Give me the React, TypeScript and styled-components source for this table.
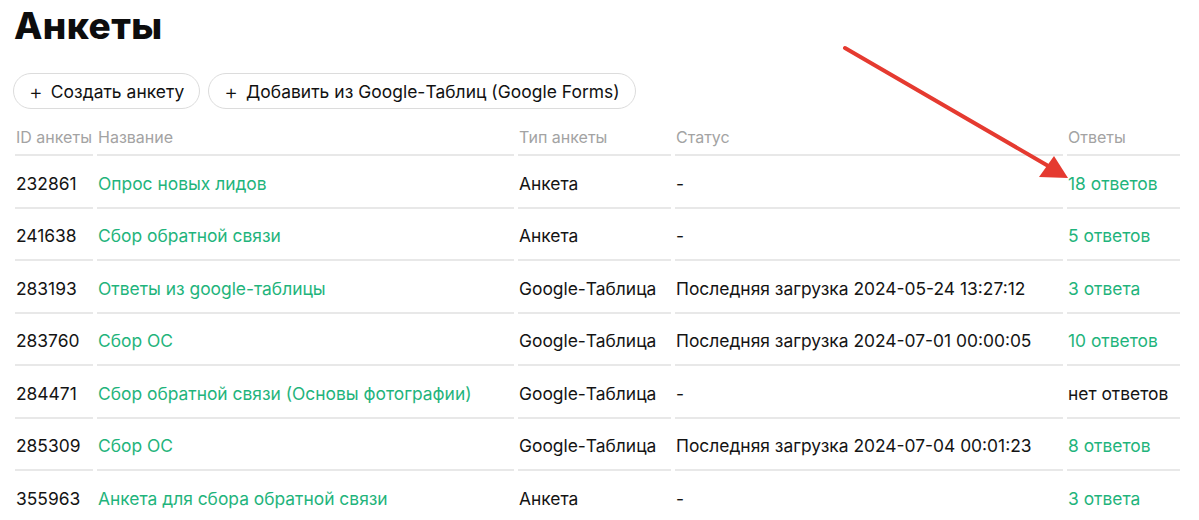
import styled, { createGlobalStyle } from "styled-components";

const GlobalStyle = createGlobalStyle`
  body {
    margin: 0;
    background: #fff;
    font-family: Inter, "Noto Sans", sans-serif;
    color: #111;
  }
`;

type Row = {
  id: string;
  name: string;
  type: string;
  status: string;
  answers: string;
  hasAnswers: boolean;
};

const rows: Row[] = [
  { id: "232861", name: "Опрос новых лидов", type: "Анкета", status: "-", answers: "18 ответов", hasAnswers: true },
  { id: "241638", name: "Сбор обратной связи", type: "Анкета", status: "-", answers: "5 ответов", hasAnswers: true },
  { id: "283193", name: "Ответы из google-таблицы", type: "Google-Таблица", status: "Последняя загрузка 2024-05-24 13:27:12", answers: "3 ответа", hasAnswers: true },
  { id: "283760", name: "Сбор ОС", type: "Google-Таблица", status: "Последняя загрузка 2024-07-01 00:00:05", answers: "10 ответов", hasAnswers: true },
  { id: "284471", name: "Сбор обратной связи (Основы фотографии)", type: "Google-Таблица", status: "-", answers: "нет ответов", hasAnswers: false },
  { id: "285309", name: "Сбор ОС", type: "Google-Таблица", status: "Последняя загрузка 2024-07-04 00:01:23", answers: "8 ответов", hasAnswers: true },
  { id: "355963", name: "Анкета для сбора обратной связи", type: "Анкета", status: "-", answers: "3 ответа", hasAnswers: true },
];

export default function App() {
  return (
    <>
      <GlobalStyle />
      <Page>
        <Title>Анкеты</Title>
        <Toolbar>
          <PillButton>
            <Plus>+</Plus>Создать анкету
          </PillButton>
          <PillButton>
            <Plus>+</Plus>Добавить из Google-Таблиц (Google Forms)
          </PillButton>
        </Toolbar>
        <Table>
          <colgroup>
            <col style={{ width: 78 }} />
            <col style={{ width: 417 }} />
            <col style={{ width: 153 }} />
            <col style={{ width: 388 }} />
            <col style={{ width: 113 }} />
          </colgroup>
          <thead>
            <tr>
              <Th>ID анкеты</Th>
              <Th>Название</Th>
              <Th>Тип анкеты</Th>
              <Th>Статус</Th>
              <Th>Ответы</Th>
            </tr>
          </thead>
          <tbody>
            {rows.map((r) => (
              <tr key={r.id}>
                <Td>{r.id}</Td>
                <Td>
                  <Link>{r.name}</Link>
                </Td>
                <Td>{r.type}</Td>
                <Td>{r.status}</Td>
                <Td>{r.hasAnswers ? <Link>{r.answers}</Link> : r.answers}</Td>
              </tr>
            ))}
          </tbody>
        </Table>
        <Arrow width="1199" height="520" viewBox="0 0 1199 520">
          <line x1="845" y1="48" x2="1050" y2="167" stroke="#e53a30" strokeWidth="4" strokeLinecap="round" />
          <polygon points="1068,178 1039,177 1054,156" fill="#e53a30" />
        </Arrow>
      </Page>
    </>
  );
}

const Page = styled.div`
  position: relative;
  width: 1199px;
  height: 520px;
  overflow: hidden;
  padding: 0 0 0 14px;
  box-sizing: border-box;
`;

const Title = styled.h1`
  margin: 0;
  padding-top: 3px;
  font-size: 37px;
  line-height: 46px;
  font-weight: 800;
  letter-spacing: 0.4px;
  color: #0d0d0d;
`;

const Toolbar = styled.div`
  display: flex;
  gap: 8px;
  margin-top: 24px;
  margin-left: -1px;
`;

const PillButton = styled.button`
  display: inline-flex;
  align-items: center;
  height: 36px;
  padding: 0 15px;
  border: 1px solid #dcdcdc;
  border-radius: 18px;
  background: #fff;
  font-family: inherit;
  font-size: 17.4px;
  letter-spacing: 0.05px;
  color: #111;
  cursor: pointer;
`;

const Plus = styled.span`
  font-size: 21px;
  font-weight: 300;
  margin-right: 8px;
  line-height: 1;
`;

const Table = styled.table`
  table-layout: fixed;
  border-collapse: separate;
  border-spacing: 4px 0;
  margin-left: -3px;
  margin-top: 11px;
  font-size: 17.4px;
`;

const Th = styled.th`
  height: 34px;
  padding: 0 0 0 1px;
  text-align: left;
  font-weight: 400;
  font-size: 16px;
  color: #a3a3a3;
  border-bottom: 2px solid #e8e8e8;
  white-space: nowrap;
`;

const Td = styled.td`
  height: 52.5px;
  padding: 4px 0 0 1px;
  box-sizing: border-box;
  border-bottom: 2px solid #e8e8e8;
  white-space: nowrap;
  color: #141414;
`;

const Link = styled.span`
  color: #1fb47c;
`;

const Arrow = styled.svg`
  position: absolute;
  left: 0;
  top: 0;
  pointer-events: none;
`;
